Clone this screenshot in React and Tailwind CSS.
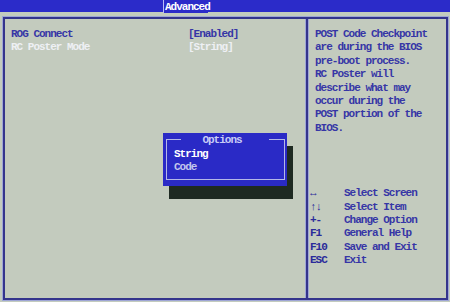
export default function App() {
  const help = [
    ["↔", "Select Screen"],
    ["↑↓", "Select Item"],
    ["+-", "Change Option"],
    ["F1", "General Help"],
    ["F10", "Save and Exit"],
    ["ESC", "Exit"],
  ];
  const desc = [
    "POST Code Checkpoint",
    "are during the BIOS",
    "pre-boot process.",
    "RC Poster will",
    "describe what may",
    "occur during the",
    "POST portion of the",
    "BIOS.",
  ];
  return (
    <div className="relative w-[450px] h-[302px] overflow-hidden bg-[#c3cbbe] font-['Liberation_Mono',monospace] text-[11px] font-bold tracking-[-1px] text-[#3636a6]">
      <div className="h-[12px] bg-[#2b2bc9] flex">
        <div className="ml-[163px] w-[45px] h-[13px] bg-[#2b2bc9] border-l border-[#b8bcf6] text-white leading-[14px] pl-[1px]">
          Advanced
        </div>
      </div>
      <div className="mt-[4px] ml-[2px] w-[447px] h-[285px] border border-[#9ea5d6]">
        <div className="w-full h-full border-2 border-[#34348c] flex">
          <div className="w-[300px] pt-[9px] pl-[6px] leading-[13px]">
            <div className="flex">
              <span className="w-[177px]">ROG Connect</span>
              <span>[Enabled]</span>
            </div>
            <div className="flex text-[#eef0f4]">
              <span className="w-[177px]">RC Poster Mode</span>
              <span>[String]</span>
            </div>
          </div>
          <div className="w-[4px] h-full bg-[#34348c] border-x border-[#9ea5d6]"></div>
          <div className="flex-1 flex flex-col leading-[13.4px]">
            <div className="pt-[9px] pl-[6px]">
              {desc.map((l) => (
                <div key={l}>{l}</div>
              ))}
            </div>
            <div className="mt-[52px] pl-[1px]">
              {help.map(([k, d]) => (
                <div key={k} className="flex">
                  <span className="w-[34px] text-[#2a2a9a]">{k}</span>
                  <span>{d}</span>
                </div>
              ))}
            </div>
          </div>
        </div>
      </div>

      <div className="absolute left-[163px] top-[133px] w-[124px] h-[53px] bg-[#2a2ac6] shadow-[6px_13px_0_#1e2a22]">
        <div className="absolute left-[3px] right-[2px] top-[6px] bottom-[6px] border-x border-b border-[#b4b8e8]">
          <div className="absolute left-0 top-0 w-[14px] h-px bg-[#b4b8e8]"></div>
          <div className="absolute right-0 top-0 w-[15px] h-px bg-[#b4b8e8]"></div>
        </div>
        <div className="absolute left-0 right-0 top-0 h-[13px] text-center leading-[13px] text-[#c8ccf6] pr-[6px] mt-[1px]">
          Options
        </div>
        <div className="absolute left-[11px] top-[15px] leading-[13px]">
          <div className="text-white">String</div>
          <div className="text-[#c2c6ec]">Code</div>
        </div>
      </div>
    </div>
  );
}
